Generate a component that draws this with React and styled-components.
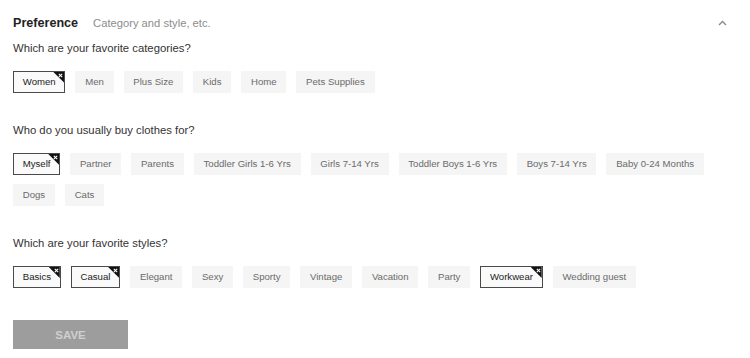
import React, { useState } from "react";
import styled, { createGlobalStyle } from "styled-components";

const GlobalStyle = createGlobalStyle`
  body {
    margin: 0;
    background: #fff;
    font-family: "Liberation Sans", Arial, sans-serif;
  }
`;

const groups = [
  {
    title: "Which are your favorite categories?",
    options: ["Women", "Men", "Plus Size", "Kids", "Home", "Pets Supplies"],
    picked: ["Women"],
  },
  {
    title: "Who do you usually buy clothes for?",
    options: [
      "Myself",
      "Partner",
      "Parents",
      "Toddler Girls 1-6 Yrs",
      "Girls 7-14 Yrs",
      "Toddler Boys 1-6 Yrs",
      "Boys 7-14 Yrs",
      "Baby 0-24 Months",
      "Dogs",
      "Cats",
    ],
    picked: ["Myself"],
  },
  {
    title: "Which are your favorite styles?",
    options: [
      "Basics",
      "Casual",
      "Elegant",
      "Sexy",
      "Sporty",
      "Vintage",
      "Vacation",
      "Party",
      "Workwear",
      "Wedding guest",
    ],
    picked: ["Basics", "Casual", "Workwear"],
  },
];

export default function App() {
  const [picked, setPicked] = useState(groups.map((g) => g.picked));

  const toggle = (gi, opt) => {
    setPicked(
      picked.map((list, i) =>
        i !== gi ? list : list.includes(opt) ? list.filter((o) => o !== opt) : [...list, opt]
      )
    );
  };

  return (
    <>
      <GlobalStyle />
      <Panel>
        <Header>
          <Title>Preference</Title>
          <Subtitle>Category and style, etc.</Subtitle>
          <Collapse aria-label="collapse">
            <svg width="9" height="6" viewBox="0 0 9 6">
              <path d="M1 5 L4.5 1.5 L8 5" fill="none" stroke="#8a8a8a" strokeWidth="1.4" />
            </svg>
          </Collapse>
        </Header>

        {groups.map((g, gi) => (
          <Group key={g.title} first={gi === 0}>
            <Question>{g.title}</Question>
            <Chips>
              {g.options.map((opt) => {
                const on = picked[gi].includes(opt);
                return (
                  <Chip key={opt} active={on} onClick={() => toggle(gi, opt)}>
                    {opt}
                    {on && (
                      <Corner>
                        <svg width="5" height="5" viewBox="0 0 5 5">
                          <path d="M0.8 0.8 L4.2 4.2 M4.2 0.8 L0.8 4.2" stroke="#fff" strokeWidth="1.1" />
                        </svg>
                      </Corner>
                    )}
                  </Chip>
                );
              })}
            </Chips>
          </Group>
        ))}

        <SaveButton disabled>SAVE</SaveButton>
      </Panel>
    </>
  );
}

const Panel = styled.div`
  width: 750px;
  height: 358px;
  box-sizing: border-box;
  padding: 14px 13px 0 13px;
`;

const Header = styled.div`
  display: flex;
  align-items: center;
  height: 17px;
`;

const Title = styled.h2`
  margin: 0;
  font-size: 12.6px;
  font-weight: bold;
  color: #222;
`;

const Subtitle = styled.span`
  margin-left: 15px;
  font-size: 11.2px;
  color: #8c8c8c;
`;

const Collapse = styled.button`
  margin-left: auto;
  margin-right: 10px;
  padding: 0;
  border: none;
  background: transparent;
  display: flex;
  align-items: center;
  cursor: pointer;
`;

const Group = styled.section`
  margin-top: ${(p) => (p.first ? "9px" : "29px")};
`;

const Question = styled.div`
  font-size: 11.3px;
  line-height: 16px;
  color: #333;
  margin-bottom: 15px;
`;

const Chips = styled.div`
  display: flex;
  flex-wrap: wrap;
  gap: 9px 10px;
`;

const Chip = styled.button`
  position: relative;
  height: 22px;
  box-sizing: border-box;
  padding: 0 8.75px;
  border: 1px solid ${(p) => (p.active ? "#4a4a4a" : "#f5f5f5")};
  background: ${(p) => (p.active ? "#fafafa" : "#f5f5f5")};
  color: ${(p) => (p.active ? "#222" : "#6b6b6b")};
  font-family: "Liberation Sans", Arial, sans-serif;
  font-size: 9.6px;
  line-height: 20px;
  cursor: pointer;
  overflow: hidden;
`;

const Corner = styled.span`
  position: absolute;
  top: 0;
  right: 0;
  width: 11px;
  height: 11px;
  background: #111;
  clip-path: polygon(0 0, 100% 0, 100% 100%);
  display: flex;
  justify-content: flex-end;
  align-items: flex-start;
  padding: 1px 1px 0 0;
  box-sizing: border-box;

  svg {
    display: block;
  }
`;

const SaveButton = styled.button`
  display: block;
  margin-top: 32px;
  width: 115px;
  height: 29px;
  border: none;
  background: #9d9d9d;
  color: #cfcfcf;
  font-family: "Liberation Sans", Arial, sans-serif;
  font-size: 11.5px;
  font-weight: bold;
  cursor: not-allowed;
`;
